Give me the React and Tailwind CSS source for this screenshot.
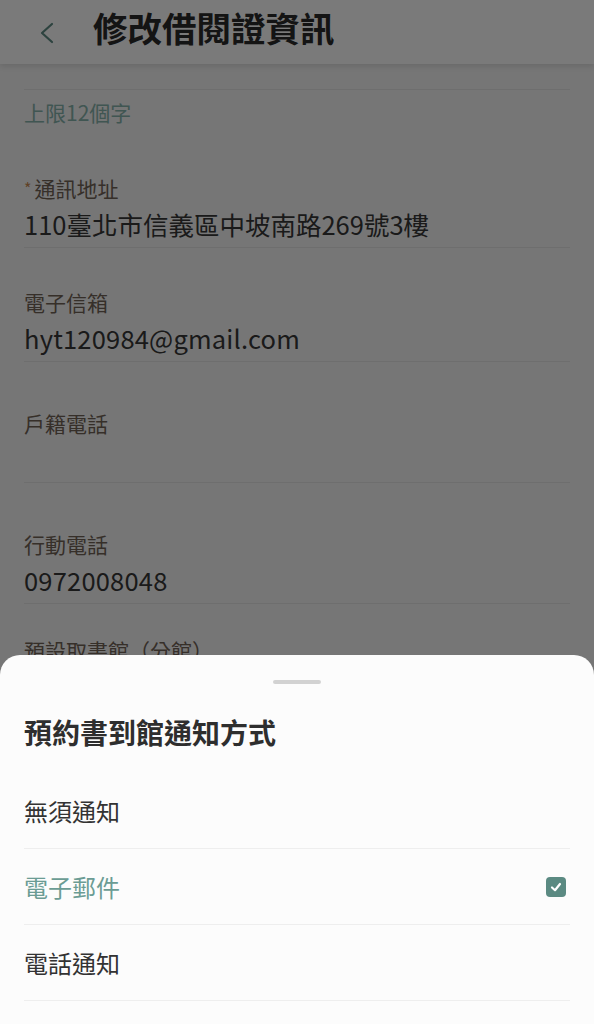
import React from "react";

const font = { fontFamily: '"Noto Sans CJK TC", "Noto Sans", sans-serif' };

function Field({ label, value, pt }) {
  return (
    <div className="border-b border-[#e6e6e6]" style={{ paddingTop: pt }}>
      <div className="text-[21px] leading-[28px] text-[#716357]">{label}</div>
      <div className="mt-[4px] h-[36px] text-[25.5px] leading-[36px] tracking-[0.2px] text-[#383838]">{value}</div>
      <div className="h-[5px]" />
    </div>
  );
}

export default function App() {
  return (
    <div className="relative h-[1024px] w-[594px] overflow-hidden bg-[#f6f6f6]" style={font}>
      {/* header */}
      <div className="relative z-10 flex h-[64px] items-center bg-white shadow-[0_2px_6px_rgba(0,0,0,0.12)]">
        <svg className="ml-[38px] mt-[2px]" width="18" height="22" viewBox="0 0 18 22" fill="none">
          <polyline points="14,2 4,11 14,20" stroke="#5f8c85" strokeWidth="2.2" strokeLinecap="round" strokeLinejoin="round" />
        </svg>
        <div className="ml-[37px] -mt-[10px] text-[34.5px] font-bold leading-[40px] text-[#2a2a2a]">修改借閱證資訊</div>
      </div>

      {/* form */}
      <div className="px-[24px]">
        <div className="h-[26px] border-b border-[#e6e6e6]" />
        <div className="mt-[8px] text-[21px] leading-[28px] text-[#86b3ac]">上限12個字</div>
        <div className="mt-[48px] border-b border-[#e6e6e6]">
          <div className="text-[21px] leading-[28px] text-[#716357]">
            <span className="mr-[3px] align-top text-[16px] text-[#c98a52]">*</span>通訊地址
          </div>
          <div className="mt-[4px] h-[36px] text-[25.5px] leading-[36px] text-[#383838]">110臺北市信義區中坡南路269號3樓</div>
          <div className="h-[5px]" />
        </div>
        <Field label="電子信箱" value="hyt120984@gmail.com" pt={40} />
        <Field label="戶籍電話" value="" pt={47} />
        <Field label="行動電話" value="0972008048" pt={47} />
        <div className="pt-[32px] text-[21px] leading-[28px] text-[#716357]">預設取書館（分館）</div>
        <div className="mt-[4px] text-[25.5px] leading-[36px] text-[#383838]">總館</div>
      </div>

      {/* overlay */}
      <div className="absolute inset-0 z-20 bg-black/[0.52]" />

      {/* bottom sheet */}
      <div className="absolute bottom-0 left-0 right-0 z-30 rounded-t-[20px] bg-[#fcfcfc] px-[24px] pb-[23px] pt-[25px]">
        <div className="mx-auto h-[4px] w-[48px] rounded-full bg-[#d2d2d2]" />
        <div className="mt-[28px] text-[28px] font-bold leading-[40px] text-[#2e2e2e]">預約書到館通知方式</div>
        <div className="mt-[21px]">
          <div className="flex h-[76px] items-center border-b border-[#eeeeee] text-[24px] text-[#333333]">無須通知</div>
          <div className="flex h-[76px] items-center justify-between border-b border-[#eeeeee] text-[24px] text-[#6b9c94]">
            <span>電子郵件</span>
            <span className="mr-[4px] flex h-[20px] w-[20px] items-center justify-center rounded-[4px] bg-[#5b8a82]">
              <svg width="14" height="14" viewBox="0 0 14 14" fill="none">
                <polyline points="3,7.5 6,10.2 11,4" stroke="white" strokeWidth="2.2" strokeLinecap="round" strokeLinejoin="round" />
              </svg>
            </span>
          </div>
          <div className="flex h-[76px] items-center border-b border-[#eeeeee] text-[24px] text-[#333333]">電話通知</div>
        </div>
      </div>
    </div>
  );
}
